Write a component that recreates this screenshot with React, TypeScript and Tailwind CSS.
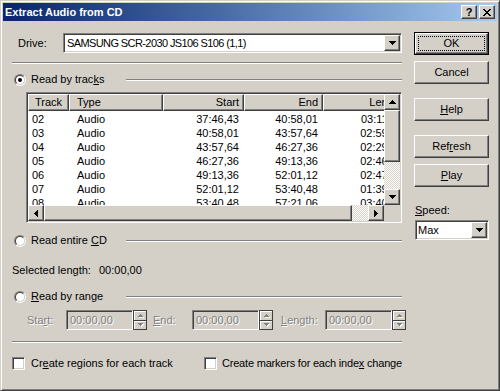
import React from "react";

const raised =
  "border border-t-white border-l-white border-r-[#404040] border-b-[#404040] shadow-[inset_-1px_-1px_#808080]";
const sunken =
  "border border-t-[#808080] border-l-[#808080] border-r-white border-b-white shadow-[inset_1px_1px_#404040,inset_-1px_-1px_#d4d0c8]";
const disabledText = "text-[#808080] [text-shadow:1px_1px_0_#fff]";
const etched = "h-[2px] border-t border-t-[#808080] border-b border-b-white";
const dither =
  "bg-[image:repeating-conic-gradient(#ffffff_0_25%,#d4d0c8_0_50%)] bg-[length:2px_2px]";

type Dir = "up" | "down" | "left" | "right";

// pixel triangle, n rows
const Arrow = ({ dir, n = 4, color = "#000" }: { dir: Dir; n?: number; color?: string }) => {
  const w = 2 * n - 1;
  const vertical = dir === "up" || dir === "down";
  const rects = Array.from({ length: n }, (_, i) => {
    const row = dir === "down" || dir === "right" ? i : n - 1 - i;
    return vertical ? (
      <rect key={i} x={i} y={row} width={w - 2 * i} height={1} fill={color} />
    ) : (
      <rect key={i} x={row} y={i} width={1} height={w - 2 * i} fill={color} />
    );
  });
  return (
    <svg
      width={vertical ? w : n}
      height={vertical ? n : w}
      shapeRendering="crispEdges"
      className="block"
    >
      {rects}
    </svg>
  );
};

const U = ({ children }: { children: React.ReactNode }) => (
  <span className="underline underline-offset-[1px]">{children}</span>
);

const Radio = ({ checked }: { checked?: boolean }) => (
  <div className="w-[12px] h-[12px] shrink-0 rounded-full border border-t-[#808080] border-l-[#808080] border-r-white border-b-white">
    <div className="w-full h-full rounded-full border border-t-[#404040] border-l-[#404040] border-r-[#d4d0c8] border-b-[#d4d0c8] bg-white flex items-center justify-center">
      {checked && <div className="w-[4px] h-[4px] rounded-full bg-black" />}
    </div>
  </div>
);

const Checkbox = () => <div className={`w-[13px] h-[13px] shrink-0 bg-white ${sunken}`} />;

const PushButton = ({ children, mt }: { children: React.ReactNode; mt: string }) => (
  <div className={`${mt} h-[23px] flex items-center justify-center ${raised}`}>{children}</div>
);

const RadioRow = ({ checked, mt, children }: { checked?: boolean; mt: string; children: React.ReactNode }) => (
  <div className={`${mt} h-[13px] flex items-center`}>
    <div className="w-[114px] flex items-center">
      <div className="ml-[2px]">
        <Radio checked={checked} />
      </div>
      <span className="ml-[5px] leading-[13px] whitespace-nowrap">{children}</span>
    </div>
    <div className={`flex-1 ${etched}`} />
  </div>
);

const Spin = () => (
  <div className="w-[14px] h-[20px] shrink-0 flex flex-col border border-[#404040] bg-[#d4d0c8]">
    <div className="flex-1 flex items-center justify-center border-b border-[#404040] shadow-[inset_1px_1px_#fff]">
      <div className="relative">
        <div className="absolute left-[1px] top-[1px]">
          <Arrow dir="up" n={3} color="#fff" />
        </div>
        <div className="relative">
          <Arrow dir="up" n={3} color="#808080" />
        </div>
      </div>
    </div>
    <div className="flex-1 flex items-center justify-center shadow-[inset_1px_1px_#fff]">
      <div className="relative">
        <div className="absolute left-[1px] top-[1px]">
          <Arrow dir="down" n={3} color="#fff" />
        </div>
        <div className="relative">
          <Arrow dir="down" n={3} color="#808080" />
        </div>
      </div>
    </div>
  </div>
);

const RangeField = () => (
  <div className={`w-[67px] h-[20px] shrink-0 flex items-center pl-[3px] bg-[#d4d0c8] ${sunken} ${disabledText}`}>
    00:00,00
  </div>
);

const cols = [
  { title: "Track", w: "w-[41px]", head: "justify-start pl-[6px]", cell: "justify-start pl-[4px]" },
  { title: "Type", w: "w-[94px]", head: "justify-start pl-[7px]", cell: "justify-start pl-[8px]" },
  { title: "Start", w: "w-[81px]", head: "justify-end pr-[4px]", cell: "justify-end pr-[5px]" },
  { title: "End", w: "w-[79px]", head: "justify-end pr-[4px]", cell: "justify-end pr-[5px]" },
  { title: "Length", w: "w-[86px]", head: "justify-end pr-[5px]", cell: "justify-end pr-[6px]" },
];

const tracks = [
  ["02", "Audio", "37:46,43", "40:58,01", "03:11,33"],
  ["03", "Audio", "40:58,01", "43:57,64", "02:59,63"],
  ["04", "Audio", "43:57,64", "46:27,36", "02:29,47"],
  ["05", "Audio", "46:27,36", "49:13,36", "02:46,00"],
  ["06", "Audio", "49:13,36", "52:01,12", "02:47,51"],
  ["07", "Audio", "52:01,12", "53:40,48", "01:39,36"],
  ["08", "Audio", "53:40,48", "57:21,06", "03:40,33"],
];

const TrackList = () => (
  <div className={`mt-[6px] ml-[14px] w-[376px] h-[131px] p-[1px] bg-white flex flex-col ${sunken}`}>
    <div className="h-[111px] flex">
      <div className="w-[356px] overflow-hidden">
        <div className="flex h-[17px] bg-[#d4d0c8]">
          {cols.map((c) => (
            <div key={c.title} className={`${c.w} shrink-0 flex items-center ${c.head} ${raised}`}>
              {c.title}
            </div>
          ))}
        </div>
        <div className="mt-[1px]">
          {tracks.map((r) => (
            <div key={r[0]} className="flex h-[14px] leading-[14px]">
              {r.map((v, i) => (
                <div key={i} className={`${cols[i].w} shrink-0 flex ${cols[i].cell}`}>
                  {v}
                </div>
              ))}
            </div>
          ))}
        </div>
      </div>
      <div className="w-[16px] flex flex-col">
        <div className={`h-[16px] flex items-center justify-center bg-[#d4d0c8] ${raised}`}>
          <Arrow dir="up" />
        </div>
        <div className={`h-[52px] bg-[#d4d0c8] ${raised}`} />
        <div className={`flex-1 ${dither}`} />
        <div className={`h-[16px] flex items-center justify-center bg-[#d4d0c8] ${raised}`}>
          <Arrow dir="down" />
        </div>
      </div>
    </div>
    <div className="h-[16px] flex">
      <div className={`w-[16px] flex items-center justify-center bg-[#d4d0c8] ${raised}`}>
        <Arrow dir="left" />
      </div>
      <div className={`w-[308px] bg-[#d4d0c8] ${raised}`} />
      <div className={`w-[16px] ${dither}`} />
      <div className={`w-[16px] flex items-center justify-center bg-[#d4d0c8] ${raised}`}>
        <Arrow dir="right" />
      </div>
      <div className="w-[16px] bg-[#d4d0c8]" />
    </div>
  </div>
);

export default function App() {
  return (
    <div className="w-[500px] h-[391px] bg-[#d4d0c8] border border-t-[#d4d0c8] border-l-[#d4d0c8] border-r-[#404040] border-b-[#404040] shadow-[inset_1px_1px_#fff,inset_-1px_-1px_#808080] p-[2px] flex flex-col overflow-hidden text-[11px] text-black font-['Liberation_Sans',Arial,sans-serif]">
      {/* caption */}
      <div className="h-[18px] shrink-0 flex items-center bg-linear-to-r from-[#0a246a] to-[#a6caf0]">
        <span className="pl-[2px] font-bold text-white">Extract Audio from CD</span>
        <div className="ml-auto flex gap-[2px] pr-[2px]">
          <div className={`w-[16px] h-[14px] flex items-center justify-center bg-[#d4d0c8] font-bold text-[11px] leading-none ${raised}`}>
            ?
          </div>
          <div className={`w-[16px] h-[14px] flex items-center justify-center bg-[#d4d0c8] ${raised}`}>
            <svg width="8" height="7" viewBox="0 0 8 7" shapeRendering="crispEdges">
              <path d="M0 0h2v1h-2zM6 0h2v1h-2zM1 1h2v1h-2zM5 1h2v1h-2zM2 2h4v1h-4zM3 3h2v1h-2zM2 4h4v1h-4zM1 5h2v1h-2zM5 5h2v1h-2zM0 6h2v1h-2zM6 6h2v1h-2z" fill="#000" />
            </svg>
          </div>
        </div>
      </div>

      <div className="flex-1 flex pl-[9px] pr-[8px]">
        {/* left column */}
        <div className="w-[390px] shrink-0 flex flex-col">
          <div className="mt-[12px] h-[20px] flex items-center">
            <span className="pl-[6px] w-[51px]">Drive:</span>
            <div className={`w-[339px] h-[20px] bg-white flex items-center ${sunken}`}>
              <span className="pl-[3px] tracking-[-0.6px] whitespace-nowrap">SAMSUNG SCR-2030 JS106 S106 (1,1)</span>
              <div className={`ml-auto mr-[1px] w-[16px] h-[16px] flex items-center justify-center bg-[#d4d0c8] ${raised}`}>
                <Arrow dir="down" />
              </div>
            </div>
          </div>
          <div className={`mt-[9px] ${etched}`} />

          <RadioRow checked mt="mt-[9px]">
            Read by trac<U>k</U>s
          </RadioRow>
          <TrackList />

          <RadioRow mt="mt-[11px]">
            Read entire <U>C</U>D
          </RadioRow>

          <div className="mt-[17px] h-[13px] flex items-center">
            <span className="w-[87px]">Selected length:</span>
            <span>00:00,00</span>
          </div>

          <RadioRow mt="mt-[13px]">
            <U>R</U>ead by range
          </RadioRow>

          <div className="mt-[7px] h-[20px] flex items-center">
            <span className={`ml-[15px] w-[39px] shrink-0 ${disabledText}`}>
              Sta<U>r</U>t:
            </span>
            <RangeField />
            <Spin />
            <span className={`ml-[6px] w-[39px] shrink-0 ${disabledText}`}>
              <U>E</U>nd:
            </span>
            <RangeField />
            <Spin />
            <span className={`ml-[8px] w-[44px] shrink-0 ${disabledText}`}>
              <U>L</U>ength:
            </span>
            <RangeField />
            <Spin />
          </div>

          <div className={`mt-[11px] ${etched}`} />

          <div className="mt-[14px] h-[13px] flex items-center whitespace-nowrap">
            <div className="w-[192px] shrink-0 flex items-center">
              <Checkbox />
              <span className="ml-[6px]">
                Cr<U>e</U>ate regions for each track
              </span>
            </div>
            <Checkbox />
            <span className="ml-[5px] tracking-[-0.2px]">
              Create markers for each inde<U>x</U> change
            </span>
          </div>
        </div>

        {/* right column */}
        <div className="w-[75px] shrink-0 ml-[12px] flex flex-col">
          <div className="mt-[11px] h-[23px] border border-black">
            <div className={`relative h-full flex items-center justify-center ${raised}`}>
              <div className="absolute inset-[2px] border border-dotted border-black" />
              OK
            </div>
          </div>
          <PushButton mt="mt-[6px]">Cancel</PushButton>
          <PushButton mt="mt-[14px]">
            <U>H</U>elp
          </PushButton>
          <PushButton mt="mt-[14px]">
            Ref<U>r</U>esh
          </PushButton>
          <PushButton mt="mt-[6px]">
            <U>P</U>lay
          </PushButton>
          <div className="mt-[17px] h-[13px] pl-[1px] flex items-center">
            <span>
              <U>S</U>peed:
            </span>
          </div>
          <div className={`mt-[3px] ml-[1px] w-[74px] h-[20px] bg-white flex items-center ${sunken}`}>
            <span className="pl-[2px]">Max</span>
            <div className={`ml-auto mr-[1px] w-[16px] h-[16px] flex items-center justify-center bg-[#d4d0c8] ${raised}`}>
              <Arrow dir="down" />
            </div>
          </div>
        </div>
      </div>
    </div>
  );
}
